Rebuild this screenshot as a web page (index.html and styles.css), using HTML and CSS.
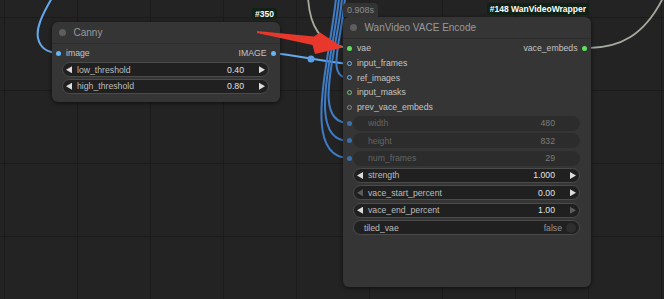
FILE: index.html
```html
<!DOCTYPE html>
<html>
<head>
<meta charset="utf-8">
<link rel="stylesheet" href="styles.css">
</head>
<body>
<div class="canvas">
  <svg class="wires" width="664" height="299" viewBox="0 0 664 299">
    <g fill="none" stroke-linecap="round">
      <path class="w-img" d="M52 -2 C42 15 36 28 38 38 C40 48 48 53 59 53"/>
      <path class="w-img" d="M273 53 C295 55 320 61 349 64"/>
      <path class="w-int" d="M345 -2 C342 40 325 78 349 78"/>
      <path class="w-int" d="M342 -2 C338 50 310 123 349 123"/>
      <path class="w-int" d="M339 -2 C334 55 305 141 349 141"/>
      <path class="w-int" d="M336 -2 C330 60 300 158 349 158"/>
      <path class="w-gen" d="M308 -2 C310 25 318 44 349 48"/>
      <path class="w-gen" d="M584 48 C620 49 645 35 664 -4"/>
    </g>
    <circle cx="311" cy="59" r="3.5" class="wdot"/>
  </svg>

  <div class="node canny">
    <div class="idbadge small">#350</div>
    <div class="header"><span class="hdot"></span><span class="title">Canny</span></div>
    <div class="body">
      <div class="slot">
        <div class="in"><span class="dot img"></span><span>image</span></div>
        <div class="out"><span>IMAGE</span><span class="dot img"></span></div>
      </div>
      <div class="widgets tight">
        <div class="wrow"><span class="spacer"></span>
          <div class="widget"><span class="arr l"></span><span class="wlabel">low_threshold</span><span class="wval">0.40</span><span class="arr r"></span></div>
        </div>
        <div class="wrow"><span class="spacer"></span>
          <div class="widget"><span class="arr l"></span><span class="wlabel">high_threshold</span><span class="wval">0.80</span><span class="arr r"></span></div>
        </div>
      </div>
    </div>
  </div>

  <div class="node wan">
    <div class="timetab">0.908s</div>
    <div class="idbadge">#148 WanVideoWrapper</div>
    <div class="header"><span class="hdot"></span><span class="title">WanVideo VACE Encode</span></div>
    <div class="body">
      <div class="slot">
        <div class="in"><span class="dot green"></span><span>vae</span></div>
        <div class="out"><span>vace_embeds</span><span class="dot green"></span></div>
      </div>
      <div class="slot"><div class="in"><span class="dot ring-blue"></span><span>input_frames</span></div></div>
      <div class="slot"><div class="in"><span class="dot ring-blue"></span><span>ref_images</span></div></div>
      <div class="slot"><div class="in"><span class="dot ring-green"></span><span>input_masks</span></div></div>
      <div class="slot"><div class="in"><span class="dot ring-gray"></span><span>prev_vace_embeds</span></div></div>
      <div class="widgets">
        <div class="wrow"><span class="dot int"></span>
          <div class="widget off"><span class="wlabel">width</span><span class="wval">480</span></div>
        </div>
        <div class="wrow"><span class="dot int"></span>
          <div class="widget off"><span class="wlabel">height</span><span class="wval">832</span></div>
        </div>
        <div class="wrow"><span class="dot int"></span>
          <div class="widget off"><span class="wlabel">num_frames</span><span class="wval">29</span></div>
        </div>
        <div class="wrow"><span class="spacer"></span>
          <div class="widget"><span class="arr l"></span><span class="wlabel">strength</span><span class="wval">1.000</span><span class="arr r"></span></div>
        </div>
        <div class="wrow"><span class="spacer"></span>
          <div class="widget"><span class="arr l dim"></span><span class="wlabel">vace_start_percent</span><span class="wval">0.00</span><span class="arr r"></span></div>
        </div>
        <div class="wrow"><span class="spacer"></span>
          <div class="widget"><span class="arr l"></span><span class="wlabel">vace_end_percent</span><span class="wval">1.00</span><span class="arr r dim"></span></div>
        </div>
        <div class="wrow"><span class="spacer"></span>
          <div class="widget toggle"><span class="wlabel">tiled_vae</span><span class="wval">false</span><span class="knob"></span></div>
        </div>
      </div>
    </div>
  </div>

  <svg class="annot" width="664" height="299" viewBox="0 0 664 299">
    <polygon class="red" points="257,31 314,36.5 320,32.5 343,47.5 315,54 312.5,45 257,33"/>
  </svg>
</div>
</body>
</html>
```
FILE: styles.css
```css
html, body {
  margin: 0;
  padding: 0;
  background: #222222;
}
body {
  width: 664px;
  height: 299px;
  overflow: hidden;
  font-family: "Liberation Sans", Arial, sans-serif;
}
.canvas {
  position: relative;
  width: 664px;
  height: 299px;
  overflow: hidden;
  background-color: #232323;
  background-image:
    linear-gradient(to right, #1b1b1b 1px, transparent 1px),
    linear-gradient(to bottom, #1b1b1b 1px, transparent 1px);
  background-size: 73px 73px;
  background-position: 4px 17px;
}
.wires, .annot {
  position: absolute;
  left: 0;
  top: 0;
}
.annot { z-index: 5; }
.w-img { stroke: #64a9ee; stroke-width: 2; }
.w-int { stroke: #3f7cc6; stroke-width: 2; }
.w-gen { stroke: #a4ab9c; stroke-width: 1.8; }
.wdot { fill: #5e9fe6; }
.red { fill: #e8382c; }

/* nodes */
.node {
  position: absolute;
  background: #353535;
  border-radius: 6px;
  box-shadow: 0 1px 4px rgba(0, 0, 0, 0.6);
}
.canny { left: 52px; top: 22px; width: 228px; height: 80px; }
.wan { left: 343px; top: 17px; width: 248px; height: 270px; }

.header {
  height: 21px;
  border-bottom: 1px solid #2c2c2c;
  display: flex;
  align-items: center;
  padding-left: 6.5px;
}
.hdot {
  width: 7px;
  height: 7px;
  border-radius: 50%;
  background: #5e5e5e;
  flex: none;
}
.title {
  margin-left: 8px;
  font-size: 10px;
  color: #9a9a9a;
  white-space: nowrap;
}

.idbadge {
  position: absolute;
  top: -14px;
  right: 2px;
  height: 12px;
  padding: 0 3px;
  display: flex;
  align-items: center;
  background: #0f2215;
  color: #ffffff;
  font-weight: bold;
  font-size: 8.5px;
  border-radius: 3px;
  white-space: nowrap;
}
.idbadge.small {
  right: 3px;
  height: 11px;
}
.timetab {
  position: absolute;
  left: 0;
  top: -14px;
  height: 14px;
  padding: 0 4px;
  display: flex;
  align-items: center;
  background: #333333;
  color: #8e8e8e;
  font-size: 9px;
  border-radius: 4px 4px 0 0;
}

.body { padding-top: 2px; }

.slot {
  height: 14.7px;
  display: flex;
  align-items: center;
  font-size: 8.7px;
  color: #c4c4c4;
}
.slot .in {
  flex: 1;
  display: flex;
  align-items: center;
  gap: 5.5px;
  padding-left: 3.5px;
  white-space: nowrap;
}
.slot .out {
  display: flex;
  align-items: center;
  gap: 4px;
  padding-right: 4.5px;
  white-space: nowrap;
}

.dot {
  width: 5px;
  height: 5px;
  border-radius: 50%;
  box-sizing: border-box;
  flex: none;
}
.dot.img { background: #64b5f6; }
.dot.green { background: #5ee05e; }
.dot.ring-blue { border: 1.5px solid #6fb3ef; }
.dot.ring-green { border: 1.5px solid #7cc47f; }
.dot.ring-gray { border: 1.5px solid #8a8a8a; }
.dot.int { background: #3c6ea8; }

/* widgets */
.widgets {
  margin-top: 1.5px;
  display: flex;
  flex-direction: column;
  gap: 2.35px;
}
.widgets.tight { gap: 1.6px; }
.wrow {
  display: flex;
  align-items: center;
  padding-left: 3.5px;
  padding-right: 11px;
  gap: 1.5px;
}
.spacer { width: 5px; flex: none; }
.widget {
  flex: 1;
  height: 15px;
  box-sizing: border-box;
  border-radius: 7.5px;
  border: 1px solid #4b4b4b;
  background: #202020;
  display: flex;
  align-items: center;
  padding: 0 3px;
  font-size: 8.7px;
  white-space: nowrap;
}
.arr {
  width: 6px;
  height: 7px;
  flex: none;
  background: #dcdcdc;
}
.arr.l { clip-path: polygon(100% 0, 0 50%, 100% 100%); }
.arr.r { clip-path: polygon(0 0, 100% 50%, 0 100%); }
.arr.dim { background: #5c5c5c; }
.wlabel {
  flex: 1;
  margin-left: 5px;
  color: #bdbdbd;
}
.wval {
  margin-right: 15px;
  color: #e2e2e2;
}
.widget.off {
  border-color: transparent;
  background: #2c2c2c;
}
.widget.off .wlabel { margin-left: 11px; color: #646464; }
.widget.off .wval { margin-right: 21px; color: #7c7c7c; }
.widget.toggle .wlabel { margin-left: 7px; }
.widget.toggle .wval { margin-right: 4px; color: #959595; }
.knob {
  width: 10px;
  height: 10px;
  border-radius: 50%;
  background: #2e2e2e;
  flex: none;
}
```
